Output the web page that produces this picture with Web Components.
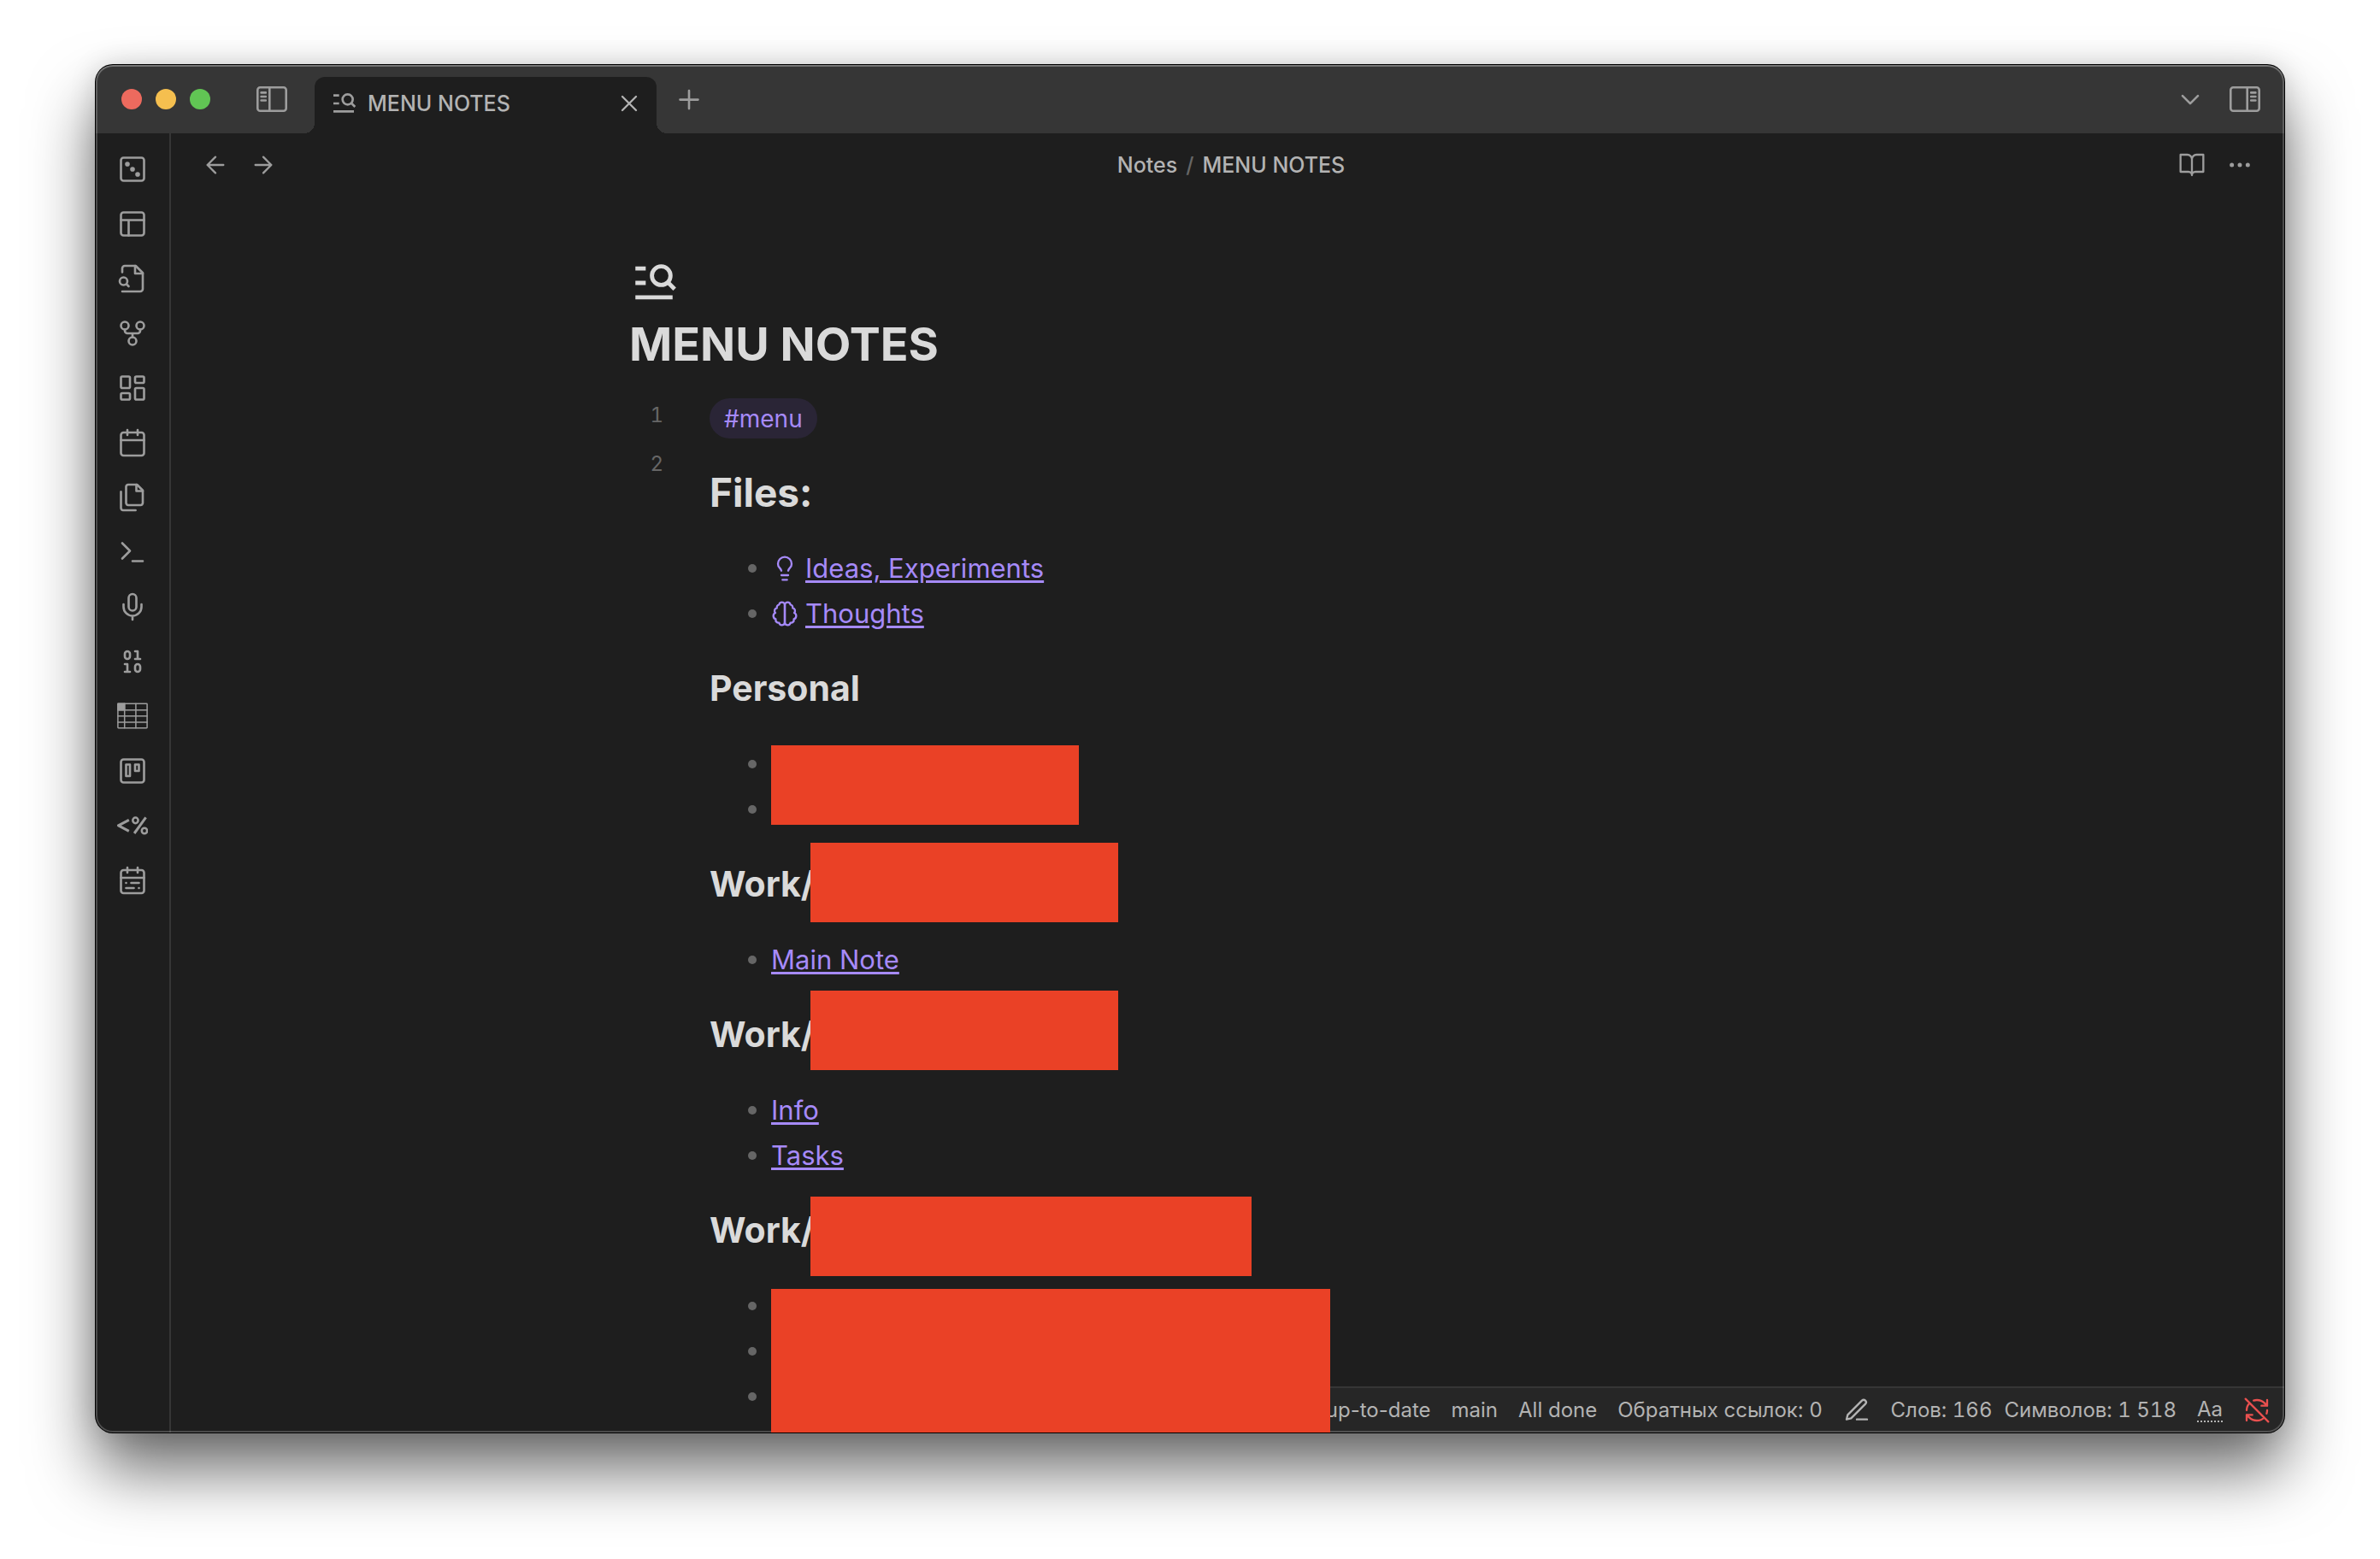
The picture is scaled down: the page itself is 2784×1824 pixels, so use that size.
<!DOCTYPE html>
<html lang="ru">
<head>
<meta charset="utf-8">
<title>MENU NOTES</title>
<style>
  html, body { margin: 0; }
  body {
    --bg: #1e1e1e; --bar: #363636; --line: #363636; --text: #dadada; --muted: #b3b3b3;
    --icon: #9d9d9d; --faint: #666; --accent: #a68af9; --cover: #ea4126;
    box-sizing: border-box; height: 100vh; padding: 76px 112px 148px; display: flex;
    background: #fff; color: var(--text); font-family: Inter, "Liberation Sans", sans-serif;
    overflow: hidden;
  }
</style>
</head>
<body>
<app-window>
  <title-bar slot="top" label="MENU NOTES"></title-bar>
  <side-ribbon slot="side"></side-ribbon>
  <view-header folder="Notes" name="MENU NOTES"></view-header>
  <note-editor heading="MENU NOTES">
    <note-heading level="1">Files:</note-heading>
    <note-list>
      <note-item icon="bulb" label="Ideas, Experiments"></note-item>
      <note-item icon="brain" label="Thoughts"></note-item>
    </note-list>
    <note-heading>Personal</note-heading>
    <note-list>
      <note-item></note-item>
      <note-item></note-item>
      <cover-block slot="cover" style="left:72px;top:5px;width:360px;height:93px"></cover-block>
    </note-list>
    <note-heading>Work/<cover-block slot="cover" style="left:118px;top:-21px;width:360px;height:93px"></cover-block></note-heading>
    <note-list>
      <note-item label="Main Note"></note-item>
    </note-list>
    <note-heading>Work/<cover-block slot="cover" style="left:118px;top:-24px;width:360px;height:93px"></cover-block></note-heading>
    <note-list>
      <note-item label="Info"></note-item>
      <note-item label="Tasks"></note-item>
    </note-list>
    <note-heading>Work/<cover-block slot="cover" style="left:118px;top:-12px;width:516px;height:93px"></cover-block></note-heading>
    <note-list>
      <note-item></note-item>
      <note-item></note-item>
      <note-item></note-item>
      <cover-block slot="cover" style="left:72px;top:7px;width:654px;height:180px"></cover-block>
    </note-list>
  </note-editor>
  <status-bar slot="status"></status-bar>
</app-window>

<script>
const ICONS = {
  menuSearch: '<g stroke="none" fill="currentColor"><path d="M3 4h5v2H3zM3 11h5v2H3zM3 18h18v2H3z"/></g><g stroke-width="2" stroke-linecap="butt"><circle cx="15.5" cy="8.5" r="4.5"/><path d="M18.6 11.6l3.4 3.4"/></g>',
  close: '<path d="M18 6 6 18M6 6l12 12"/>',
  plus: '<path d="M5 12.4h14M12 5.4v14"/>',
  chevron: '<path d="m6 9.4 6 6 6-6"/>',
  back: '<path d="M19 12H5M12 19l-7-7 7-7"/>',
  forward: '<path d="M5 12h14M12 5l7 7-7 7"/>',
  book: '<path d="M2 3h6a4 4 0 0 1 4 4v14a3 3 0 0 0-3-3H2zM22 3h-6a4 4 0 0 0-4 4v14a3 3 0 0 1 3-3h7z"/>',
  more: '<g fill="currentColor"><circle cx="12" cy="12" r="1"/><circle cx="19" cy="12" r="1"/><circle cx="5" cy="12" r="1"/></g>',
  dice: '<rect x="3" y="3" width="18" height="18" rx="2"/><g fill="currentColor"><circle cx="8" cy="8" r="1"/><circle cx="12" cy="12" r="1"/><circle cx="16" cy="16" r="1"/></g>',
  layout: '<rect x="3" y="3" width="18" height="18" rx="2"/><path d="M3 9h18M9 21V9"/>',
  fileSearch: '<path d="M4 22h14a2 2 0 0 0 2-2V7.5L14.5 2H6a2 2 0 0 0-2 2v3"/><path d="M14 2v6h6"/><circle cx="5" cy="14" r="3"/><path d="m9 18-1.5-1.5"/>',
  fork: '<circle cx="12" cy="18" r="3"/><circle cx="6" cy="6" r="3"/><circle cx="18" cy="6" r="3"/><path d="M18 9v1a2 2 0 0 1-2 2H8a2 2 0 0 1-2-2V9M12 12v3"/>',
  dashboard: '<rect x="3" y="3" width="7" height="9" rx="1"/><rect x="14" y="3" width="7" height="5" rx="1"/><rect x="14" y="12" width="7" height="9" rx="1"/><rect x="3" y="16" width="7" height="5" rx="1"/>',
  calendar: '<rect x="3" y="4" width="18" height="18" rx="2"/><path d="M16 2v4M8 2v4M3 10h18"/>',
  files: '<path d="M15.5 2H8.6c-.4 0-.8.2-1.1.5-.3.3-.5.7-.5 1.1v12.8c0 .4.2.8.5 1.1.3.3.7.5 1.1.5h9.8c.4 0 .8-.2 1.1-.5.3-.3.5-.7.5-1.1V6.5L15.5 2z"/><path d="M3 7.6v12.8c0 .4.2.8.5 1.1.3.3.7.5 1.1.5h9.8M15 2v5h5"/>',
  terminal: '<path d="m4 17 6-6-6-6M12 19h8"/>',
  mic: '<path d="M12 2a3 3 0 0 0-3 3v7a3 3 0 0 0 6 0V5a3 3 0 0 0-3-3Z"/><path d="M19 10v2a7 7 0 0 1-14 0v-2M12 19v3"/>',
  binary: '<rect x="14" y="14" width="4" height="6" rx="2"/><rect x="6" y="4" width="4" height="6" rx="2"/><path d="M6 20h4M14 10h4M6 14h2v6M14 4h2v6"/>',
  table: '<g stroke-width="1"><rect x=".6" y="2.1" width="22.8" height="19" rx=".4"/><path d="M5.8 2.1v19M14.6 2.1v19M.6 7.2h22.8M.6 11.8h22.8M.6 16.6h22.8"/><path fill="currentColor" d="M.6 2.1h5.2v5.1H.6z"/></g>',
  kanban: '<rect x="3" y="3" width="18" height="18" rx="2"/><path d="M7 7h3v9H7zM14 7h3v5h-3z"/>',
  percent: '<g stroke-width="2" stroke-linecap="butt"><path d="M9.2 7.6 1 11.9l8.2 4.3"/><path d="M22.4 5.6 13.4 18"/><ellipse cx="14.3" cy="7.9" rx="2.1" ry="2.2" stroke-width="1.7"/><ellipse cx="21.3" cy="16" rx="2.1" ry="2.2" stroke-width="1.7"/></g>',
  range: '<rect x="3" y="4" width="18" height="18" rx="2"/><path d="M16 2v4M8 2v4M3 10h18M17 14h-6M13 18H7M7 14h.01M17 18h.01"/>',
  bulb: '<path d="M15 14c.2-1 .7-1.7 1.5-2.5 1-.9 1.5-2.2 1.5-3.5A6 6 0 0 0 6 8c0 1 .2 2.2 1.5 3.5.7.7 1.3 1.5 1.5 2.5M9 18h6M10 22h4"/>',
  brain: '<path d="M9.5 2A2.5 2.5 0 0 1 12 4.5v15a2.5 2.5 0 0 1-4.96.44 2.5 2.5 0 0 1-2.96-3.08 3 3 0 0 1-.34-5.58 2.5 2.5 0 0 1 1.32-4.24 2.5 2.5 0 0 1 1.98-3A2.5 2.5 0 0 1 9.5 2Z"/><path d="M14.5 2A2.5 2.5 0 0 0 12 4.5v15a2.5 2.5 0 0 0 4.96.44 2.5 2.5 0 0 0 2.96-3.08 3 3 0 0 0 .34-5.58 2.5 2.5 0 0 0-1.32-4.24 2.5 2.5 0 0 0-1.98-3A2.5 2.5 0 0 0 14.5 2Z"/>',
  pen: '<path d="M12 20h9M16.5 3.5a2.12 2.12 0 0 1 3 3L7 19l-4 1 1-4Z"/>',
  syncOff: '<path d="M21 8 18.74 5.74A9.75 9.75 0 0 0 12 3c-1 0-1.97.16-2.87.47M8 16H3v5M3 12c0-2.49 1-4.74 2.64-6.36M3 16l2.26 2.26A9.75 9.75 0 0 0 12 21c2.49 0 4.74-1 6.36-2.64M21 12c0 1-.16 1.97-.47 2.87M21 3v5h-5M22 22 2 2"/>',
  panelLeft: '<rect x="1.3" y="1.3" width="33.4" height="27.4" rx="3"/><path d="M15.3 1.3v27.4M5.6 7.4h5.2M5.6 12h5.2M5.6 16.5h5.2"/>',
  panelRight: '<rect x="1.3" y="1.3" width="33.4" height="27.4" rx="3"/><path d="M20.7 1.3v27.4M25.2 7.4h5.2M25.2 12h5.2M25.2 16.5h5.2"/>'
};

const define = (name, render) => customElements.define(name, class extends HTMLElement {
  constructor() {
    super();
    this.attachShadow({ mode: 'open' });
  }
  connectedCallback() {
    this.shadowRoot.innerHTML = render(this);
  }
});

const BUTTON = 'button{all:unset;display:flex;flex:none;color:var(--icon)}';

define('ui-icon', el => {
  const name = el.getAttribute('name');
  const panel = name.startsWith('panel');
  const size = Number(el.getAttribute('size') || 36);
  return `<style>:host{display:block;flex:none;line-height:0}
    svg{display:block;fill:none;stroke:currentColor;stroke-linecap:round;stroke-linejoin:round}</style>
    <svg aria-hidden="true" width="${size}" height="${panel ? 30 : size}" viewBox="0 0 ${panel ? '36 30' : '24 24'}" stroke-width="${panel ? 2.6 : 1.75}">${ICONS[name]}</svg>`;
});

define('app-window', () => `
  <style>
    :host{position:relative;display:flex;flex-direction:column;flex:1;min-width:0;border-radius:20px;background:var(--bg);
      box-shadow:0 0 0 1px #000,0 0 32px rgba(0,0,0,.14),0 44px 76px rgba(0,0,0,.58)}
    .frame{position:relative;display:flex;flex-direction:column;flex:1;min-height:0;border-radius:20px;overflow:hidden}
    .frame::after{content:"";position:absolute;inset:0;z-index:2;border-radius:20px;pointer-events:none;
      box-shadow:inset 0 0 0 2px rgba(255,255,255,.2),inset 0 2px 0 rgba(255,255,255,.14)}
    .body{display:flex;flex:1;min-height:0}
    main{display:flex;flex-direction:column;flex:1;min-width:0}
    .status{position:absolute;right:0;bottom:0;z-index:1}
  </style>
  <div class="frame">
    <slot name="top"></slot>
    <div class="body"><slot name="side"></slot><main><slot></slot></main></div>
    <div class="status"><slot name="status"></slot></div>
  </div>`);

define('title-bar', el => `
  <style>
    ${BUTTON}
    :host{display:flex;align-items:center;height:80px;background:var(--bar);padding:0 28px 0 30px}
    .lights{display:flex;gap:16px}
    .lights button{width:24px;height:24px;border-radius:50%}
    .side{margin-left:54px}
    .tab{position:relative;box-sizing:border-box;align-self:flex-end;display:flex;align-items:center;width:400px;height:66px;
      margin-left:32px;padding:0 16px 4px 18px;border-radius:12px 12px 0 0;background:var(--bg);color:var(--muted);font-size:25px;font-weight:500;line-height:32px}
    .tab::before,.tab::after{content:"";position:absolute;bottom:0;width:12px;height:12px}
    .tab::before{right:100%;background:radial-gradient(circle at 0 0,transparent 12px,var(--bg) 12px)}
    .tab::after{left:100%;background:radial-gradient(circle at 100% 0,transparent 12px,var(--bg) 12px)}
    .tab span{flex:1;margin-left:12px}
    .tab ui-icon{color:var(--icon)}
    .tab button ui-icon{color:var(--muted)}
    .add{margin-left:20px}
    .right{display:flex;align-items:center;gap:28px;margin-left:auto}
  </style>
  <div class="lights">
    <button aria-label="Close window" style="background:#ed6a5e"></button>
    <button aria-label="Minimize window" style="background:#f5bf4f"></button>
    <button aria-label="Zoom window" style="background:#61c554"></button>
  </div>
  <button class="side" aria-label="Left sidebar"><ui-icon name="panelLeft"></ui-icon></button>
  <div class="tab"><ui-icon name="menuSearch" size="32"></ui-icon><span>${el.getAttribute('label')}</span><button aria-label="Close tab"><ui-icon name="close" size="32"></ui-icon></button></div>
  <button class="add" aria-label="New tab"><ui-icon name="plus"></ui-icon></button>
  <div class="right">
    <button aria-label="Tab list"><ui-icon name="chevron"></ui-icon></button>
    <button aria-label="Right sidebar"><ui-icon name="panelRight"></ui-icon></button>
  </div>`);

define('side-ribbon', () => `
  <style>
    ${BUTTON}
    :host{box-sizing:border-box;display:flex;flex-direction:column;align-items:center;gap:28px;width:88px;padding-top:24px;border-right:2px solid var(--line)}
  </style>` + [
    ['dice', 'Random note'], ['layout', 'Workspaces'], ['fileSearch', 'Quick switcher'], ['fork', 'Graph view'],
    ['dashboard', 'Canvas'], ['calendar', 'Daily note'], ['files', 'Templates'], ['terminal', 'Command palette'],
    ['mic', 'Record audio'], ['binary', 'Binary'], ['table', 'Table'], ['kanban', 'Kanban board'],
    ['percent', 'Templater'], ['range', 'Periodic note']
  ].map(([i, l]) => `<button aria-label="${l}"><ui-icon name="${i}"></ui-icon></button>`).join(''));

define('view-header', el => `
  <style>
    ${BUTTON}
    :host{display:flex;align-items:center;flex:none;height:74px;padding:0 36px;font-size:25px;font-weight:500;line-height:32px;color:var(--muted)}
    .nav,.actions{display:flex;gap:24px}
    nav{display:flex;flex:1;justify-content:center;gap:10px;padding-left:8px}
    a{color:inherit;text-decoration:none}
    .sep{color:var(--faint)}
  </style>
  <div class="nav"><button aria-label="Back"><ui-icon name="back" size="32"></ui-icon></button><button aria-label="Forward"><ui-icon name="forward" size="32"></ui-icon></button></div>
  <nav><a href="#notes">${el.getAttribute('folder')}</a><span class="sep">/</span><span>${el.getAttribute('name')}</span></nav>
  <div class="actions"><button aria-label="Reading view"><ui-icon name="book" size="32"></ui-icon></button><button aria-label="More options"><ui-icon name="more" size="32"></ui-icon></button></div>`);

define('note-editor', el => `
  <style>
    :host{display:block;flex:1;min-height:0;padding-top:72px}
    article{max-width:1400px;margin:0 auto}
    h1{margin:8px 0 19px;font-size:54px;line-height:70px;font-weight:700}
    .grid{display:flex}
    .gutter{width:40px;margin-right:54px;text-align:right;font-size:24px;line-height:57px;color:var(--faint);font-variant-numeric:tabular-nums}
    .content{flex:1;min-width:0;padding-top:9px}
    .tag{display:inline-block;padding:1px 17px 0;border-radius:24px;background:#2a2536;color:var(--accent);font-size:28px;line-height:46px;text-decoration:none;vertical-align:top}
    .row{height:48px}
  </style>
  <article>
    <ui-icon name="menuSearch" size="58"></ui-icon>
    <h1>${el.getAttribute('heading')}</h1>
    <div class="grid">
      <div class="gutter"><div>1</div><div>2</div></div>
      <div class="content"><div class="row"><a class="tag" href="#menu">#menu</a></div><slot></slot></div>
    </div>
  </article>`);

define('note-heading', el => {
  const top = el.getAttribute('level') === '1';
  return `
  <style>
    :host{display:block;position:relative;margin:${top ? '32px 0' : '34px 0 35px'}}
    h2{margin:0;font-weight:700;font-size:${top ? 46 : 41}px;line-height:${top ? 60 : 54}px}
  </style>
  <h2><slot></slot></h2><slot name="cover"></slot>`;
});

define('note-list', () => `
  <style>:host{display:block;position:relative}</style>
  <div role="list"><slot></slot></div><slot name="cover"></slot>`);

define('note-item', el => {
  const label = el.getAttribute('label');
  const icon = el.getAttribute('icon');
  return `
  <style>
    :host{display:flex;align-items:center;height:53px;padding-left:45px;font-size:31px;line-height:52px}
    i{width:10px;height:10px;margin-right:17px;border-radius:50%;background:var(--faint)}
    ui-icon{margin-right:8px;color:var(--accent)}
    a{color:var(--accent);text-decoration:underline;text-decoration-thickness:3px;text-underline-offset:3px}
  </style>
  <i></i>${icon ? `<ui-icon name="${icon}" size="32"></ui-icon>` : ''}${label ? `<a href="#note">${label}</a>` : ''}`;
});

define('cover-block', () => `<style>:host{position:absolute;z-index:3;background:var(--cover)}</style>`);

define('status-bar', () => `
  <style>
    ${BUTTON}
    :host{box-sizing:border-box;display:flex;align-items:center;gap:24px;height:54px;padding:0 16px 0 24px;
      border-top:2px solid var(--line);background:#262626;color:var(--muted);font-size:24px;line-height:30px;white-space:nowrap}
    button{color:var(--muted)}
    .count{display:flex;gap:14px;font-variant-numeric:tabular-nums}
    .case{border-bottom:2px dotted var(--muted);line-height:26px}
    .off{color:#e9504f}
  </style>
  <span>up-to-date</span><span>main</span><span>All done</span><span>Обратных ссылок: 0</span>
  <button aria-label="Edit mode"><ui-icon name="pen" size="32"></ui-icon></button>
  <div class="count"><span>Слов: 166</span><span>Символов: 1 518</span></div>
  <span class="case">Aa</span>
  <button class="off" aria-label="Sync off"><ui-icon name="syncOff" size="32"></ui-icon></button>`);
</script>
</body>
</html>
